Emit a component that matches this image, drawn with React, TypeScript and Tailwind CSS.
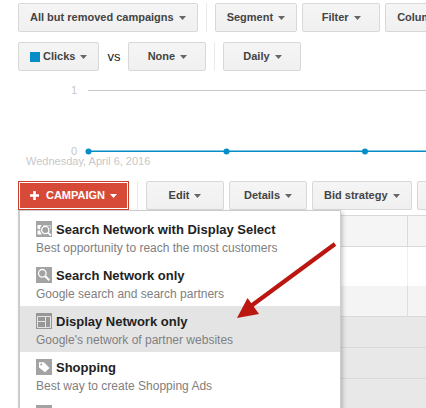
import type { ReactNode } from 'react';

function Caret({ className = 'text-[#666]' }: { className?: string }) {
  return (
    <svg viewBox="0 0 7 4" className={`h-1 w-[7px] shrink-0 ${className}`} aria-hidden="true">
      <path d="M0 0h7L3.5 4z" fill="currentColor" />
    </svg>
  );
}

function ToolbarButton({ children }: { children: ReactNode }) {
  return (
    <button
      type="button"
      className="flex h-[29px] min-w-[78px] shrink-0 items-center justify-center gap-[5px] whitespace-nowrap rounded-xs border border-[#d8d8d8] bg-linear-to-b from-[#f5f5f5] to-[#f0f0f0] px-[11px] text-[11px] font-bold text-[#444]"
    >
      {children}
      <Caret />
    </button>
  );
}

function Divider() {
  return <div className="mx-2 h-[29px] w-px shrink-0 bg-[#ebebeb]" />;
}

function IconBox({ children, className = 'bg-[#a3a3a3]' }: { children?: ReactNode; className?: string }) {
  return (
    <span className={`h-4 w-4 shrink-0 ${className}`}>
      <svg viewBox="0 0 16 16" className="h-4 w-4" fill="none" stroke="#fff" aria-hidden="true">
        {children}
      </svg>
    </span>
  );
}

const menuItems = [
  {
    title: 'Search Network with Display Select',
    text: 'Best opportunity to reach the most customers',
    icon: (
      <IconBox>
        <path d="M1.5 4h4L4.2 6.500v4L6 13.500H1.500v-4h2.200V8H1.500z" fill="#fff" stroke="none" />
        <path d="M7 4.500h7.500V8" opacity="0.5" />
        <circle cx="9.300" cy="9" r="3.600" strokeWidth="1.300" />
        <path d="M12 11.700l3 3" strokeWidth="1.800" />
      </IconBox>
    ),
  },
  {
    title: 'Search Network only',
    text: 'Google search and search partners',
    icon: (
      <IconBox>
        <circle cx="6.3" cy="6.3" r="3.8" strokeWidth="1.3" />
        <path d="M9 9l4.3 4.3" strokeWidth="2" />
      </IconBox>
    ),
  },
  {
    title: 'Display Network only',
    text: "Google's network of partner websites",
    active: true,
    icon: (
      <IconBox className="bg-[#979797]">
        <path d="M1.5 3.5h13v11h-13zM9.5 3.5v11M1.5 8.5h8" stroke="#e4e4e4" />
      </IconBox>
    ),
  },
  {
    title: 'Shopping',
    text: 'Best way to create Shopping Ads',
    icon: (
      <IconBox>
        <path d="M3 3.2h5l5.5 5.8L9 13.3 3 8.5z" fill="#fff" stroke="none" />
        <circle cx="5.2" cy="5.4" r="1" fill="#a3a3a3" stroke="none" />
      </IconBox>
    ),
  },
  { title: 'Video', text: 'Promote your videos', icon: <IconBox /> },
];

function CampaignMenu() {
  return (
    <ul className="absolute left-0 top-[29px] z-10 w-[323px] border border-l-2 border-[#ccc] bg-white py-[3px] shadow-[2px_2px_4px_rgba(0,0,0,0.2)]">
      {menuItems.map((item) => (
        <li key={item.title}>
          <button
            type="button"
            className={`flex h-[46px] w-full flex-col items-start whitespace-nowrap px-4 pt-[7px] text-left ${
              item.active ? 'bg-[#e4e4e4]' : 'bg-white'
            }`}
          >
            <span className="flex h-4 items-start gap-1 text-[13px] leading-[18px] font-bold text-[#222]">
              {item.icon}
              {item.title}
            </span>
            <span className="mt-[3px] text-[12px] leading-4 text-[#808080]">{item.text}</span>
          </button>
        </li>
      ))}
    </ul>
  );
}

function Chart() {
  return (
    <div className="h-[110px] text-[11px]">
      <svg className="block h-[110px] w-full" role="img" aria-label="Clicks by day">
        <g fill="#c8c8c8" stroke="none">
          <text x="77" y="23" textAnchor="end">1</text>
          <text x="77" y="84" textAnchor="end">0</text>
          <text x="26" y="94">Wednesday, April 6, 2016</text>
        </g>
        <line x1="88" y1="19.5" x2="100%" y2="19.5" stroke="#c8c8c8" />
        <line x1="88" y1="80.3" x2="100%" y2="80.3" stroke="#058dc7" strokeWidth="1.6" />
        <g fill="#058dc7">
          <circle cx="88.5" cy="80.5" r="3" />
          <circle cx="226.5" cy="80.5" r="3" />
          <circle cx="365" cy="80.5" r="3" />
        </g>
      </svg>
    </div>
  );
}

function CampaignTable() {
  return (
    <table className="w-full table-fixed border-collapse">
      <colgroup>
        <col className="w-[389px]" />
        <col />
      </colgroup>
      <tbody>
        <tr className="h-[31px] border-y border-[#d9d9d9] bg-[#f5f5f5]">
          <td className="border-r border-[#d9d9d9]" />
          <td />
        </tr>
        <tr className="h-[39px] bg-white">
          <td className="border-r border-[#f0f0f0]" />
          <td />
        </tr>
        <tr className="h-[31px] border-b border-[#d9d9d9] bg-[#f4f4f4]">
          <td className="border-r border-[#dedede]" />
          <td />
        </tr>
        <tr className="h-[31px] border-b border-[#d9d9d9] bg-[#e8e8e8]">
          <td colSpan={2} />
        </tr>
        <tr className="h-[31px] border-b border-[#d9d9d9] bg-[#e8e8e8]">
          <td colSpan={2} />
        </tr>
        <tr className="h-[31px] border-b border-[#d9d9d9] bg-[#e8e8e8]">
          <td colSpan={2} />
        </tr>
      </tbody>
    </table>
  );
}

export default function App() {
  return (
    <main className="h-screen overflow-hidden bg-white pt-[3px] font-['Liberation_Sans',Arial,sans-serif]">
      <div className="flex pl-[18px]">
        <ToolbarButton>All but removed campaigns</ToolbarButton>
        <Divider />
        <div className="flex gap-[5px]">
          <ToolbarButton>Segment</ToolbarButton>
          <ToolbarButton>Filter</ToolbarButton>
          <ToolbarButton>Columns</ToolbarButton>
        </div>
      </div>

      <div className="mt-[10px] flex items-center pl-[18px]">
        <ToolbarButton>
          <span className="flex items-center gap-[3px]">
            <span className="h-[10px] w-[10px] bg-[#058dc7]" />
            Clicks
          </span>
        </ToolbarButton>
        <span className="px-2 text-[13px] text-[#222]">vs</span>
        <ToolbarButton>None</ToolbarButton>
        <Divider />
        <ToolbarButton>Daily</ToolbarButton>
      </div>

      <Chart />

      <div className="relative ml-[18px] flex">
        <button
          type="button"
          className="flex h-[29px] w-[111px] shrink-0 items-center justify-center gap-[5px] border border-[#c9402f] bg-[#d84a38] text-[11px] font-bold text-white inset-ring inset-ring-white"
        >
          <svg viewBox="0 0 9 9" className="mr-[2px] h-[9px] w-[9px]" aria-hidden="true">
            <path d="M4.5 0v9M0 4.5h9" stroke="currentColor" strokeWidth="2.6" />
          </svg>
          CAMPAIGN
          <Caret className="text-white" />
        </button>
        <Divider />
        <div className="flex gap-[5px]">
          <ToolbarButton>Edit</ToolbarButton>
          <ToolbarButton>Details</ToolbarButton>
          <ToolbarButton>Bid strategy</ToolbarButton>
          <ToolbarButton>Automate</ToolbarButton>
        </div>
        <CampaignMenu />
        {/* arrow pointing at the display network entry */}
        <svg
          viewBox="0 0 100 78"
          className="pointer-events-none absolute left-[219px] top-[61px] z-20 h-[78px] w-[100px]"
          aria-hidden="true"
        >
          <path d="M98 2L14 64" stroke="#bb1610" strokeWidth="4.2" />
          <path d="M0 76L10.5 56L22 72z" fill="#bb1610" />
        </svg>
      </div>

      <div className="mt-[5px] pl-[18px]">
        <CampaignTable />
      </div>
    </main>
  );
}
